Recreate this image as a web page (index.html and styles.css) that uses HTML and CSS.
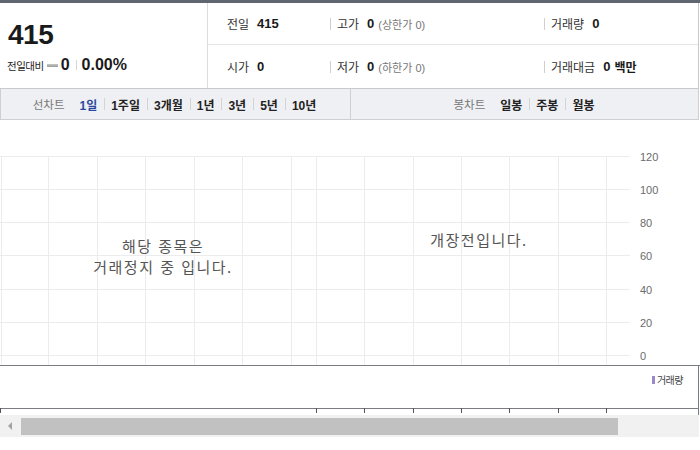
FILE: index.html
```html
<!DOCTYPE html>
<html lang="ko">
<head>
<meta charset="utf-8">
<title>시세</title>
<link rel="stylesheet" href="styles.css">
</head>
<body>
<div class="wrap">
  <div class="topbar"></div>
  <div class="header">
    <div class="summary">
      <div class="price">415</div>
      <div class="change">
        <span class="lbl">전일대비</span>
        <span class="flat"></span>
        <span class="num">0</span>
        <span class="vsep"></span>
        <span class="num">0.00%</span>
      </div>
    </div>
    <div class="info">
      <div class="row">
        <div class="cell"><span class="k">전일</span><span class="v">415</span></div>
        <div class="cell div"><span class="k">고가</span><span class="v">0</span><span class="sub">(상한가 0)</span></div>
        <div class="cell div"><span class="k">거래량</span><span class="v">0</span></div>
      </div>
      <div class="row">
        <div class="cell"><span class="k">시가</span><span class="v">0</span></div>
        <div class="cell div"><span class="k">저가</span><span class="v">0</span><span class="sub">(하한가 0)</span></div>
        <div class="cell div"><span class="k">거래대금</span><span class="v">0</span><span class="unit">백만</span></div>
      </div>
    </div>
  </div>
  <div class="tabs">
    <div class="tabgroup left">
      <span class="tlabel">선차트</span>
      <span class="tab on">1일</span><span class="tsep"></span>
      <span class="tab">1주일</span><span class="tsep"></span>
      <span class="tab">3개월</span><span class="tsep"></span>
      <span class="tab">1년</span><span class="tsep"></span>
      <span class="tab">3년</span><span class="tsep"></span>
      <span class="tab">5년</span><span class="tsep"></span>
      <span class="tab">10년</span>
    </div>
    <div class="tabgroup right">
      <span class="tlabel">봉차트</span>
      <span class="tab">일봉</span><span class="tsep"></span>
      <span class="tab">주봉</span><span class="tsep"></span>
      <span class="tab">월봉</span>
    </div>
  </div>
  <div class="chart">
    <svg class="grid" width="700" height="246" viewBox="0 0 700 246">
      <g stroke="#ececec" stroke-width="1">
        <line x1="0" y1="36.5" x2="630" y2="36.5"/>
        <line x1="0" y1="69.5" x2="630" y2="69.5"/>
        <line x1="0" y1="102.5" x2="630" y2="102.5"/>
        <line x1="0" y1="135.5" x2="630" y2="135.5"/>
        <line x1="0" y1="169.5" x2="630" y2="169.5"/>
        <line x1="0" y1="202.5" x2="630" y2="202.5"/>
        <line x1="0" y1="235.5" x2="630" y2="235.5"/>
        <line x1="1.5" y1="36" x2="1.5" y2="245"/>
        <line x1="48.5" y1="36" x2="48.5" y2="245"/>
        <line x1="97.5" y1="36" x2="97.5" y2="245"/>
        <line x1="145.5" y1="36" x2="145.5" y2="245"/>
        <line x1="194.5" y1="36" x2="194.5" y2="245"/>
        <line x1="242.5" y1="36" x2="242.5" y2="245"/>
        <line x1="291.5" y1="36" x2="291.5" y2="245"/>
        <line x1="316.5" y1="36" x2="316.5" y2="245"/>
        <line x1="364.5" y1="36" x2="364.5" y2="245"/>
        <line x1="413.5" y1="36" x2="413.5" y2="245"/>
        <line x1="461.5" y1="36" x2="461.5" y2="245"/>
        <line x1="509.5" y1="36" x2="509.5" y2="245"/>
        <line x1="558.5" y1="36" x2="558.5" y2="245"/>
        <line x1="606.5" y1="36" x2="606.5" y2="245"/>
      </g>
      <line x1="0" y1="245.5" x2="700" y2="245.5" stroke="#7a7d82" stroke-width="1"/>
      <g class="ylab">
        <text x="640" y="41">120</text>
        <text x="640" y="74">100</text>
        <text x="640" y="107">80</text>
        <text x="640" y="140">60</text>
        <text x="640" y="174">40</text>
        <text x="640" y="207">20</text>
        <text x="640" y="240">0</text>
      </g>
    </svg>
    <div class="msg halt">해당 종목은<br>거래정지 중 입니다.</div>
    <div class="msg pre">개장전입니다.</div>
  </div>
  <div class="volume">
    <span class="legend"><span class="swatch"></span>거래량</span>
  </div>
  <svg class="axis" width="700" height="7" viewBox="0 0 700 7">
    <line x1="0" y1="0.5" x2="699" y2="0.5" stroke="#7a7d82"/>
    <g stroke="#555">
      <line x1="0.5" y1="0" x2="0.5" y2="5"/>
      <line x1="316.5" y1="0" x2="316.5" y2="5"/>
      <line x1="364.5" y1="0" x2="364.5" y2="5"/>
      <line x1="413.5" y1="0" x2="413.5" y2="5"/>
      <line x1="461.5" y1="0" x2="461.5" y2="5"/>
      <line x1="509.5" y1="0" x2="509.5" y2="5"/>
      <line x1="558.5" y1="0" x2="558.5" y2="5"/>
      <line x1="606.5" y1="0" x2="606.5" y2="5"/>
    </g>
    <line x1="698.5" y1="0" x2="698.5" y2="7" stroke="#7a7d82"/>
  </svg>
  <div class="scroll">
    <span class="arrow"></span>
    <div class="thumb"></div>
  </div>
</div>
</body>
</html>
```

FILE: styles.css
```css
* { box-sizing: border-box; }
html, body { margin: 0; padding: 0; background: #fff; }
body {
  font-family: "Liberation Sans", "Noto Sans CJK KR", sans-serif;
  color: #222;
}
.wrap { width: 700px; }
.topbar { height: 3px; background: #5f6670; }

.header {
  display: flex;
  height: 86px;
  width: 699px;
  border-bottom: 1px solid #c9c9c9;
  border-right: 1px solid #c9c9c9;
}
.summary {
  width: 208px;
  border-right: 1px solid #dcdcdc;
  padding: 18px 0 0 8px;
}
.price {
  font-size: 28px;
  font-weight: bold;
  line-height: 28px;
  color: #1a1a1a;
  letter-spacing: -0.5px;
}
.change {
  display: flex;
  align-items: center;
  margin-top: 6px;
  margin-left: -1px;
  height: 20px;
}
.change .lbl { font-size: 10.5px; color: #222; letter-spacing: -0.5px; }
.change .flat {
  width: 11px; height: 3px; margin: 0 3px 0 3px;
  background: linear-gradient(#c8c8c8, #9a9a9a);
}
.change .num { font-size: 16px; font-weight: bold; color: #1a1a1a; }
.change .vsep { width: 1px; height: 10px; background: #d5d5d5; margin: 0 5px 0 6px; }

.info { flex: 1; display: flex; flex-direction: column; }
.row {
  display: grid;
  grid-template-columns: 122px 214px 1fr;
  align-items: center;
}
.row:first-child { height: 42px; border-bottom: 1px solid #e6e6e6; }
.row:last-child { flex: 1; }
.cell { display: flex; align-items: center; font-size: 12px; }
.cell:first-child { padding-left: 19px; }
.cell.div::before {
  content: ""; width: 1px; height: 12px; background: #cfcfcf; margin-right: 6px;
}
.k { color: #333; }
.v { font-size: 13px; font-weight: bold; color: #1a1a1a; margin-left: 8px; }
.sub { font-size: 11px; color: #777; margin-left: 4px; }
.unit { font-size: 12px; font-weight: bold; color: #1a1a1a; margin-left: 4px; }

.tabs {
  display: flex;
  height: 31px;
  width: 699px;
  background: #eff0f4;
  border-left: 1px solid #cfcfcf;
  border-right: 1px solid #cfcfcf;
  border-bottom: 1px solid #cfcfcf;
}
.tabgroup {
  display: flex; align-items: center; justify-content: center;
  font-size: 12px;
}
.tabgroup.left { width: 350px; border-right: 1px solid #cfcfcf; padding-right: 2px; }
.tabgroup.right { flex: 1; padding-right: 1px; }
.tlabel { color: #777; margin-right: 15px; font-size: 11.5px; }
.tab { font-weight: bold; color: #222; }
.tab.on { color: #2a4aa0; }
.tsep { width: 1px; height: 12px; background: #d3d3d3; margin: 0 6px 0 7px; }

.chart { position: relative; height: 246px; }
.grid { display: block; }
.ylab text { font-family: "Liberation Sans", sans-serif; font-size: 11px; fill: #6b6b6b; }
.msg {
  position: absolute;
  font-family: "Noto Sans CJK KR", sans-serif;
  font-size: 15px;
  line-height: 21px;
  letter-spacing: 1.5px;
  color: #555;
  text-align: center;
}
.msg.halt { left: 43px; width: 240px; top: 115px; }
.msg.pre { left: 359px; width: 240px; top: 109px; }

.volume {
  height: 42px;
  width: 699px;
  border-right: 1px solid #7a7d82;
  display: flex;
  justify-content: flex-end;
  align-items: flex-start;
  padding: 6px 15px 0 0;
}
.legend {
  display: flex; align-items: center;
  font-family: "Noto Sans CJK KR", sans-serif;
  font-size: 10px; color: #444; letter-spacing: -0.5px;
}
.swatch { width: 3px; height: 8px; background: #9a88c9; margin-right: 2px; }
.axis { display: block; }

.scroll {
  display: flex; align-items: center;
  width: 699px; height: 22px;
  background: #f1f1f1;
}
.arrow {
  width: 0; height: 0;
  margin-left: 8px; margin-right: 9px;
  border-top: 4px solid transparent;
  border-bottom: 4px solid transparent;
  border-right: 4px solid #a3a3a3;
}
.thumb { width: 597px; height: 17px; background: #c1c1c1; }
```
